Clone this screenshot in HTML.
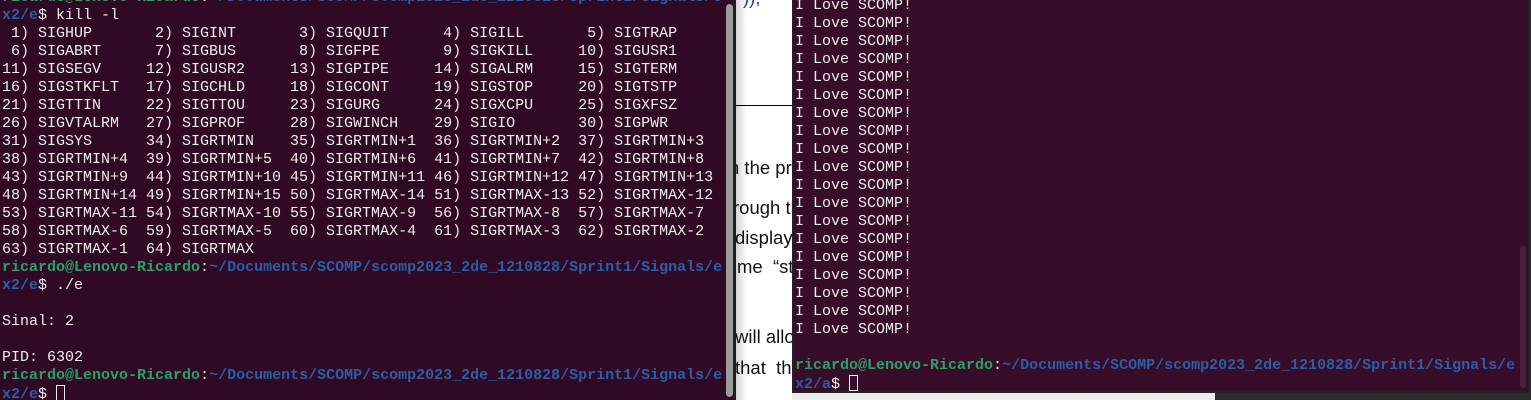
<!DOCTYPE html>
<html><head><meta charset="utf-8"><style>
html,body{margin:0;padding:0;width:1531px;height:400px;overflow:hidden;background:#2b2b2b;position:relative}
.doc{position:absolute;left:735px;top:0;width:480px;height:400px;background:#fff;overflow:hidden}
.doc .sh{position:absolute;left:0;top:0;width:12px;height:400px;background:linear-gradient(to right,#d0d0d0,#fff)}
.doc .ln{position:absolute;left:0;top:105px;width:60px;height:1px;background:#000}
.doc .t{position:absolute;font-family:"Liberation Sans",sans-serif;font-size:18.5px;color:#111;white-space:pre;line-height:20px}
.term{position:absolute;font-family:"Liberation Mono",monospace;font-size:15px;line-height:18px;color:#eeeeec;white-space:pre;overflow:hidden}
.t1{left:0;top:0;width:733px;height:400px;background:#300a24;border-right:3px solid #1e1e1e}
.t2{left:792px;top:0;width:734px;height:391px;background:#380d2a;border:2px solid #222;border-top:none}
.in{position:absolute;left:2px}
.g{color:#26a269;font-weight:bold}.b{color:#2a5ea8;font-weight:bold}
.cur{display:inline-block;width:9px;height:16px;border:1px solid #eee;box-sizing:border-box;vertical-align:-3px}
.sb1{position:absolute;left:726px;top:4px;width:7px;height:393px;background:#9b9b9b;border-radius:4px}
.sb2{position:absolute;left:726px;top:246px;width:6px;height:142px;background:#4a2040;border-radius:3px}
.bot{position:absolute;left:792px;top:393px;width:423px;height:7px;background:#ececec}
</style></head><body>
<div class="doc"><div class="sh"></div><div class="ln"></div>
<div class="t" style="left:8px;top:-12px;color:#1a3fa0">));</div>
<div class="t" style="left:-6px;top:158px">n the pro</div>
<div class="t" style="left:-2px;top:198px">rough th</div>
<div class="t" style="left:0px;top:228px">displayin</div>
<div class="t" style="left:2px;top:257px">me  “st</div>
<div class="t" style="left:0px;top:327px">will allo</div>
<div class="t" style="left:0px;top:358px">that  th</div>
</div>
<div class="bot"></div>
<div class="term t1"><div class="in" style="top:-11px"><span class="g">ricardo@Lenovo-Ricardo</span>:<span class="b">~/Documents/SCOMP/scomp2023_2de_1210828/Sprint1/Signals/e</span>
<span class="b">x2/e</span>$ kill -l
 1) SIGHUP       2) SIGINT       3) SIGQUIT      4) SIGILL       5) SIGTRAP
 6) SIGABRT      7) SIGBUS       8) SIGFPE       9) SIGKILL     10) SIGUSR1
11) SIGSEGV     12) SIGUSR2     13) SIGPIPE     14) SIGALRM     15) SIGTERM
16) SIGSTKFLT   17) SIGCHLD     18) SIGCONT     19) SIGSTOP     20) SIGTSTP
21) SIGTTIN     22) SIGTTOU     23) SIGURG      24) SIGXCPU     25) SIGXFSZ
26) SIGVTALRM   27) SIGPROF     28) SIGWINCH    29) SIGIO       30) SIGPWR
31) SIGSYS      34) SIGRTMIN    35) SIGRTMIN+1  36) SIGRTMIN+2  37) SIGRTMIN+3
38) SIGRTMIN+4  39) SIGRTMIN+5  40) SIGRTMIN+6  41) SIGRTMIN+7  42) SIGRTMIN+8
43) SIGRTMIN+9  44) SIGRTMIN+10 45) SIGRTMIN+11 46) SIGRTMIN+12 47) SIGRTMIN+13
48) SIGRTMIN+14 49) SIGRTMIN+15 50) SIGRTMAX-14 51) SIGRTMAX-13 52) SIGRTMAX-12
53) SIGRTMAX-11 54) SIGRTMAX-10 55) SIGRTMAX-9  56) SIGRTMAX-8  57) SIGRTMAX-7
58) SIGRTMAX-6  59) SIGRTMAX-5  60) SIGRTMAX-4  61) SIGRTMAX-3  62) SIGRTMAX-2
63) SIGRTMAX-1  64) SIGRTMAX
<span class="g">ricardo@Lenovo-Ricardo</span>:<span class="b">~/Documents/SCOMP/scomp2023_2de_1210828/Sprint1/Signals/e</span>
<span class="b">x2/e</span>$ ./e

Sinal: 2

PID: 6302
<span class="g">ricardo@Lenovo-Ricardo</span>:<span class="b">~/Documents/SCOMP/scomp2023_2de_1210828/Sprint1/Signals/e</span>
<span class="b">x2/e</span>$ <span class="cur"></span></div><div class="sb1"></div></div>
<div class="term t2"><div class="in" style="top:-3px;left:1px">I Love SCOMP!
I Love SCOMP!
I Love SCOMP!
I Love SCOMP!
I Love SCOMP!
I Love SCOMP!
I Love SCOMP!
I Love SCOMP!
I Love SCOMP!
I Love SCOMP!
I Love SCOMP!
I Love SCOMP!
I Love SCOMP!
I Love SCOMP!
I Love SCOMP!
I Love SCOMP!
I Love SCOMP!
I Love SCOMP!
I Love SCOMP!

<span class="g">ricardo@Lenovo-Ricardo</span>:<span class="b">~/Documents/SCOMP/scomp2023_2de_1210828/Sprint1/Signals/e</span>
<span class="b">x2/a</span>$ <span class="cur"></span></div><div class="sb2"></div></div>
</body></html>
